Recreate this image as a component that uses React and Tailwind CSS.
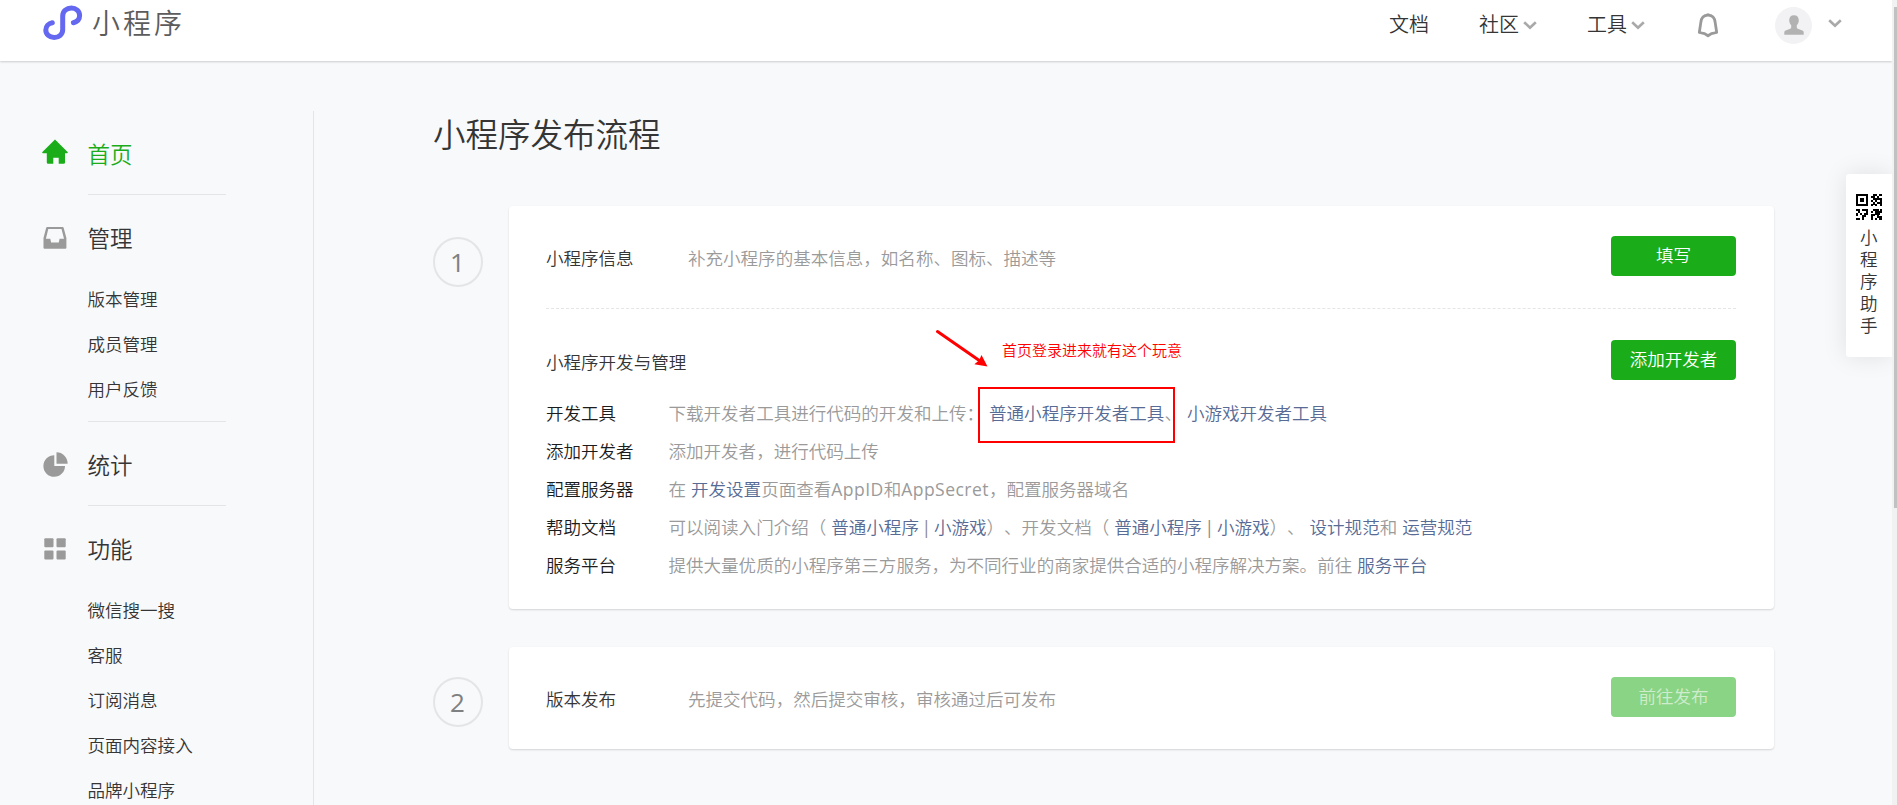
import clsx from "clsx";

const HomeIcon = () => (
  <svg width="26" height="25" viewBox="0 0 26 25" fill="#1aad19">
    <path d="M13 0.4 25.6 13a0.7 0.7 0 0 1-0.5 1.2H23v9.3a1.3 1.3 0 0 1-1.3 1.3h-5v-6h-5.4v6h-5.2a1.3 1.3 0 0 1-1.3-1.3v-9.3H0.9A0.7 0.7 0 0 1 0.4 13z" />
  </svg>
);

const InboxIcon = () => (
  <svg width="24" height="22" viewBox="0 0 24 22" fill="#9a9a9a">
    <path
      fillRule="evenodd"
      d="M4.3 0h15.2a1.2 1.2 0 0 1 1.2 0.9L23.4 11v9.8a1 1 0 0 1-1 1H1.5a1 1 0 0 1-1-1V11L3.1 0.9A1.2 1.2 0 0 1 4.3 0zM5.3 1.9 2.9 11.8h4.4l0.8 3.8h7.7l0.8-3.8h4.4L18.5 1.9z"
    />
  </svg>
);

const PieIcon = () => (
  <svg width="25" height="25" viewBox="0 0 25 25" fill="#9a9a9a">
    <path d="M11.3 3.2v10.7H22A10.8 10.8 0 1 1 11.3 3.2z" />
    <path d="M13.5 0.3A11.2 11.2 0 0 1 24.6 11.7H13.5z" />
  </svg>
);

const GridIcon = () => (
  <svg width="22" height="22" viewBox="0 0 22 22" fill="#9a9a9a">
    <rect x="0.3" y="0.2" width="9.2" height="9" rx="1" />
    <rect x="12.5" y="0.2" width="9.2" height="9" rx="1" />
    <rect x="0.3" y="12.6" width="9.2" height="9" rx="1" />
    <rect x="12.5" y="12.6" width="9.2" height="9" rx="1" />
  </svg>
);

const Chevron = () => (
  <svg width="14" height="9" viewBox="0 0 14 9" fill="none" stroke="#a9a9a9" strokeWidth="2.6">
    <path d="M1.2 1.2 7 6.8 12.8 1.2" />
  </svg>
);

const Logo = () => (
  <svg
    width="40"
    height="36"
    viewBox="0 0 40 36"
    fill="none"
    stroke="#6467f0"
    strokeWidth="5"
    strokeLinecap="round"
  >
    <path d="M9.3 17.7C5.6 18.4 2.8 21.2 2.8 24.9c0 4.5 3.8 7.6 8.4 7.6 4.8 0 8.5-3.2 8.5-7.7V10.9c0-4.7 4-7.9 8.7-7.9 4.6 0 8.2 3.2 8.2 7.5 0 3.7-2.6 6.3-6.2 7.2" />
  </svg>
);

const QrIcon = () => (
  <svg width="26" height="26" viewBox="0 0 26 26" shapeRendering="crispEdges">
    <path fill="none" stroke="#000" strokeWidth="2" d="M1 1h10v10H1z" />
    <path d="M4 4h4v4H4zM17 0h4v2h-4zM23 0h3v2h-3zM15 2h4v2h-4zM21 2h2v2h-2zM17 4h9v2h-9zM15 6h2v2h-2zM19 6h2v2h-2zM24 6h2v6h-2zM17 8h2v3h-2zM21 8h3v2h-3zM15 10h2v2h-2zM19 10h2v2h-2z" />
    <path d="M0 15h4v2H0zM6 15h6v2H6zM2 17h2v2H2zM4 19h2v2H4zM10 17h2v4h-2zM8 19h2v2H8zM0 19h2v3H0zM6 21h4v2H6zM0 24h4v2H0zM6 23h2v3H6z" />
    <path d="M17 15h6v2h-6zM24 15h2v2h-2zM15 17h2v2h-2zM19 17h7v2h-7zM19 19h5v2h-5zM15 20h4v2h-4zM21 21h2v3h-2zM15 22h2v4h-2zM19 24h2v2h-2zM23 22h3v4h-3z" />
  </svg>
);

const menu = [
  { name: "首页", icon: <HomeIcon />, active: true, items: [] },
  { name: "管理", icon: <InboxIcon />, items: ["版本管理", "成员管理", "用户反馈"] },
  { name: "统计", icon: <PieIcon />, items: [] },
  {
    name: "功能",
    icon: <GridIcon />,
    items: ["微信搜一搜", "客服", "订阅消息", "页面内容接入", "品牌小程序"],
  },
];

const Header = () => {
  return (
    <header className="relative z-10 flex justify-between h-[61px] mr-[5px] pl-[43px] pr-[50px] bg-white shadow-[0_1px_2px_rgba(0,0,0,0.18)]">
      <div className="flex items-start pt-[5px]">
        <Logo />
        <div className="ml-[9px] mt-px text-[28px] leading-[34px] tracking-[3px] text-[#5c5c5c]">
          小程序
        </div>
      </div>
      <nav className="flex items-center h-[50px] text-[20px] leading-[30px]">
        <a className="w-[90px]">文档</a>
        <a className="flex items-center gap-1 w-[108px]">
          社区
          <Chevron />
        </a>
        <a className="flex items-center gap-1 w-[110px]">
          工具
          <Chevron />
        </a>
        <svg
          className="mr-[56px]"
          width="22"
          height="25"
          viewBox="0 0 22 25"
          fill="none"
          stroke="#9a9a9a"
          strokeWidth="2.8"
        >
          <path
            d="M11 2.2C6.4 2.2 4.2 5.4 3.8 9.6L2.3 19.5 7.6 20.6 11 22.8 14.4 20.6 19.7 19.5 18.2 9.6C17.8 5.4 15.6 2.2 11 2.2z"
            strokeLinejoin="round"
          />
          <path d="M11 0.5v2" />
        </svg>
        <div className="flex items-center justify-center w-[37px] h-[37px] rounded-full bg-[#f2f2f4]">
          <svg width="20" height="20" viewBox="0 0 20 20" fill="#b2b2b2">
            <path d="M10 0.3c3 0 4.8 2 4.8 4.9 0 2-0.8 3.8-2 5v2.3c0 0.6 0.4 0.9 1 1.2l4.5 1.9c0.9 0.4 1.4 1 1.4 1.9v2.2H0.3v-2.2c0-0.9 0.5-1.5 1.4-1.9l4.5-1.9c0.6-0.3 1-0.6 1-1.2v-2.3c-1.2-1.2-2-3-2-5C5.2 2.3 7 0.3 10 0.3z" />
          </svg>
        </div>
        <div className="ml-4 -mt-1">
          <Chevron />
        </div>
      </nav>
    </header>
  );
};

const Sidebar = () => {
  return (
    <aside className="w-[314px] h-[694px] mt-[50px] pl-[42px] border-r border-[#e4e5e7]">
      {menu.map((group, i) => (
        <div key={group.name}>
          <div
            className={clsx(
              "flex items-center h-[45px] mt-[21px] text-[22.5px]",
              group.active && "text-[#1aad19]"
            )}
          >
            <div
              className={clsx(
                "flex justify-center w-[26px] mr-[19.5px]",
                group.active ? "-mt-[6px]" : "-mt-[2px]"
              )}
            >
              {group.icon}
            </div>
            {group.name}
          </div>
          {group.items.length > 0 && (
            <ul className="mt-4 ml-[45.5px]">
              {group.items.map((item) => (
                <li key={item} className="h-[45px] leading-[45px]">
                  {item}
                </li>
              ))}
            </ul>
          )}
          {i < menu.length - 1 && (
            <div
              className={clsx(
                "ml-[46px] w-[138px] h-px bg-[#e4e5e7]",
                group.items.length > 0 ? "mt-[9px]" : "mt-[17px]"
              )}
            />
          )}
        </div>
      ))}
    </aside>
  );
};

const Step = ({ num, children }) => (
  <section className="flex items-start">
    <div
      className={clsx(
        "flex items-center justify-center w-[50px] h-[50px] mr-[26px] pr-px rounded-full border-2 border-[#e4e5e7] text-[26px] font-normal text-[#7f8081]",
        num === "1" ? "mt-[31px]" : "mt-[30px]"
      )}
    >
      {num}
    </div>
    <div className="relative w-[1265px] pl-[37px] pr-[38px] bg-white rounded-[4px] shadow-[0_1px_2px_rgba(0,0,0,0.15)]">
      {children}
    </div>
  </section>
);

const Button = ({ name, disabled }) => (
  <button
    className={clsx(
      "w-[125px] h-10 pb-px rounded-[4px]",
      disabled ? "bg-[#8ad485] text-white/60" : "bg-[#1aad19] text-white"
    )}
  >
    {name}
  </button>
);

const Link = ({ children, gap = true }) => (
  <a className={clsx("text-[#576b95]", gap && "ml-[5px]")}>{children}</a>
);

const Bar = () => (
  <span className="inline-block w-[15px] text-center font-normal text-[#8a8a8a]">|</span>
);

const Row = ({ label, children }) => (
  <div className="flex h-[38px] leading-[38px] whitespace-nowrap">
    <div className="w-[122.5px] text-[#1c1c1c]">{label}</div>
    <div className="text-[#9a9a9a]">{children}</div>
  </div>
);

// red marks drawn over the first card
const Annotation = () => (
  <>
    <svg className="absolute left-[427px] top-[123px]" width="54" height="40" viewBox="0 0 54 40">
      <path d="M1.5 2.5 44 32" stroke="#f00" strokeWidth="3" strokeLinecap="round" />
      <path d="M51.5 37.5 38.3 35.2 43 31.5 45.5 26z" fill="#f00" />
    </svg>
    <div className="absolute left-[493px] top-[133px] text-[15px] leading-[22px] text-[#f00] whitespace-nowrap">
      首页登录进来就有这个玩意
    </div>
    <div className="absolute left-[469px] top-[181px] w-[197px] h-[56px] border-2 border-[#f00]" />
  </>
);

const App = () => {
  return (
    <div className="relative w-full h-[805px] overflow-hidden bg-[#f8f9fb] text-[17.55px] font-[350] text-[#353535] font-['Open_Sans','Noto_Sans_CJK_SC',sans-serif] [text-spacing-trim:space-all]">
      <Header />
      <div className="flex">
        <Sidebar />
        <main className="ml-[119px]">
          <h1 className="mt-[50px] mb-[47px] text-[32.5px] leading-[48px]">小程序发布流程</h1>
          <Step num="1">
            <div className="flex items-start h-[103px] border-b border-dashed border-[#e4e5e7] pt-[30px]">
              <div className="w-[142px] leading-[45px]">小程序信息</div>
              <div className="flex-1 leading-[45px] text-[#9a9a9a]">
                补充小程序的基本信息，如名称、图标、描述等
              </div>
              <Button name="填写" />
            </div>
            <div className="flex items-start justify-between h-[85px] pt-[31px]">
              <div className="leading-[45px]">小程序开发与管理</div>
              <Button name="添加开发者" />
            </div>
            <div className="pb-[25px]">
              <Row label="开发工具">
                下载开发者工具进行代码的开发和上传：<Link>普通小程序开发者工具</Link>、
                <Link>小游戏开发者工具</Link>
              </Row>
              <Row label="添加开发者">添加开发者，进行代码上传</Row>
              <Row label="配置服务器">
                在<Link>开发设置</Link>页面查看
                <span className="font-normal tracking-[0.45px]">AppID</span>和
                <span className="font-normal tracking-[0.45px]">AppSecret</span>，配置服务器域名
              </Row>
              <Row label="帮助文档">
                可以阅读入门介绍（<Link>普通小程序</Link>
                <Bar />
                <Link gap={false}>小游戏</Link>）、开发文档（<Link>普通小程序</Link>
                <Bar />
                <Link gap={false}>小游戏</Link>）、<Link>设计规范</Link>和<Link>运营规范</Link>
              </Row>
              <Row label="服务平台">
                提供大量优质的小程序第三方服务，为不同行业的商家提供合适的小程序解决方案。前往
                <Link>服务平台</Link>
              </Row>
            </div>
            <Annotation />
          </Step>
          <div className="h-[38px]" />
          <Step num="2">
            <div className="flex items-start h-[102px] pt-[30px]">
              <div className="w-[142px] leading-[45px]">版本发布</div>
              <div className="flex-1 leading-[45px] text-[#9a9a9a]">
                先提交代码，然后提交审核，审核通过后可发布
              </div>
              <Button name="前往发布" disabled />
            </div>
          </Step>
        </main>
      </div>
      <div className="absolute right-[5px] top-[174px] flex flex-col items-center w-[46px] h-[183px] pt-5 bg-white rounded-l-[3px] shadow-[0_0_25px_rgba(0,0,0,0.1)]">
        <QrIcon />
        <div className="w-[18px] mt-[6px] leading-[22px]">小程序助手</div>
      </div>
      <div className="absolute right-0 top-0 z-20 w-[5px] h-full pt-[7px] bg-[#f1f1f1]">
        <div className="ml-[2px] h-[501px] bg-[#c1c1c1]" />
      </div>
    </div>
  );
};

export default App;
